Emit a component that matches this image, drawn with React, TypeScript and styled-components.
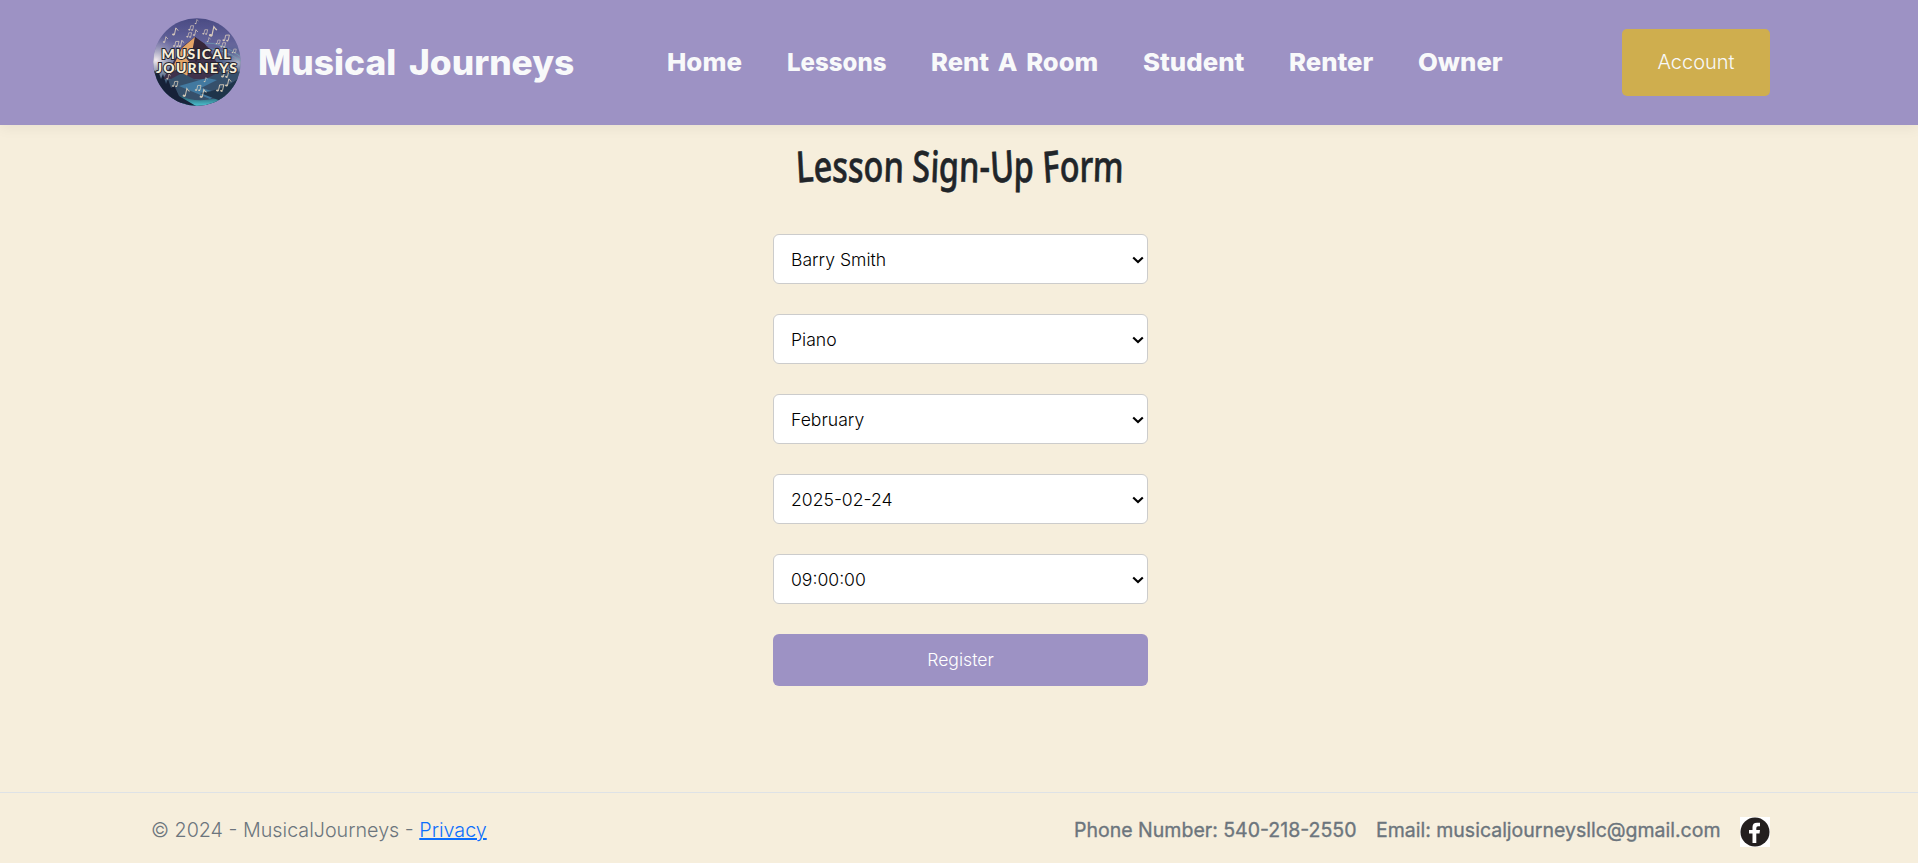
import React, { useLayoutEffect, useRef, useState } from 'react';
import styled, { createGlobalStyle } from 'styled-components';

const GlobalStyle = createGlobalStyle`
  *, *::before, *::after { box-sizing: border-box; }
  html, body { margin: 0; background: #f6eedc; }
  body { font-family: Inter, "Liberation Sans", sans-serif; font-weight: 300; font-size: 20px; color: #212529; overflow: hidden; }
`;

const Page = styled.div`
  display: flex;
  flex-direction: column;
  height: 863px;
`;

const Header = styled.header`
  flex: 0 0 125px;
  display: flex;
  align-items: center;
  padding: 0 148px 0 153px;
  background: #9d92c4;
  box-shadow: 0 4px 12px rgba(0, 0, 0, 0.05);
`;

const Brand = styled.a`
  display: flex;
  align-items: center;
  gap: 17px;
  width: 514px;
  padding-bottom: 2px;
  color: #f8f9fa;
  font-size: 35px;
  font-weight: 800;
  word-spacing: 5px;
`;

const Logo = styled.svg`
  width: 88px;
  height: 88px;
  flex: none;
`;

const Nav = styled.nav`
  flex: 1;
  display: flex;
  gap: 45px;
  padding-bottom: 2px;
`;

const NavLink = styled.a`
  color: #f8f9fa;
  font-size: 24.5px;
  font-weight: 800;
  line-height: 36px;
  word-spacing: 3px;
`;

const AccountButton = styled.button`
  width: 148px;
  height: 67px;
  padding: 0 0 2px;
  border: 0;
  border-radius: 5px;
  background: #cfae4e;
  color: #f8f9fa;
  font: 300 20px Inter, sans-serif;
`;

const Main = styled.main`
  flex: 1;
  display: flex;
  flex-direction: column;
  align-items: center;
`;

const Title = styled.h1`
  margin: 11px 0 38px 2px;
  height: 60px;
  font: 500 43px/60px "Noto Sans", "Open Sans", sans-serif;
  -webkit-text-stroke: 0.6px #212529;
`;

const Letter = styled.span<{ $tilt: number }>`
  display: inline-block;
  white-space: pre;
  transform: rotate(${(p) => p.$tilt}deg);
`;

const Form = styled.form`
  display: flex;
  flex-direction: column;
  gap: 30px;
  width: 375px;
  margin-left: 3px;
`;

const Field = styled.label`
  display: grid;
  grid-template-columns: 1fr 12px 4px;
  align-items: center;
  height: 50px;
`;

const Select = styled.select`
  grid-area: 1 / 1 / 2 / 4;
  appearance: none;
  height: 50px;
  padding: 0 0 0 17px;
  border: 1px solid #ccc;
  border-radius: 6px;
  background: #fff;
  color: #000;
  font: 300 17.6px Inter, sans-serif;
`;

const Chevron = styled.svg`
  grid-area: 1 / 2;
  width: 12px;
  height: 8px;
  margin-top: 1px;
  pointer-events: none;
  z-index: 1;
`;

const Submit = styled.button`
  height: 52px;
  padding: 0 0 2px;
  border: 0;
  border-radius: 6px;
  background: #9d92c4;
  color: #fff;
  font: 300 17.6px Inter, sans-serif;
`;

const Footer = styled.footer`
  flex: 0 0 71px;
  display: flex;
  align-items: center;
  padding: 8px 148px 0 151px;
  border-top: 1px solid #dee2e6;
  color: #6c757d;
`;

const Copyright = styled.div`
  margin: -4px auto 0 0;
`;

const Privacy = styled.a`
  color: #0d6efd;
  text-decoration: underline;
`;

const Contact = styled.span`
  margin: -4px 19px 0 0;
  font-weight: 400;
  -webkit-text-stroke: 0.35px #6c757d;
`;

const Facebook = styled.svg`
  width: 30px;
  height: 30px;
`;

const FitBox = styled.span`
  display: inline-block;
  white-space: nowrap;
`;

const FitText = styled.span`
  display: inline-block;
  transform-origin: 0 50%;
`;

/* Squeezes or widens a line of text to a fixed width. */
function Fit({ width, children }: { width: number; children: React.ReactNode }) {
  const ref = useRef<HTMLSpanElement>(null);
  const [scale, setScale] = useState(1);
  useLayoutEffect(() => {
    if (ref.current) setScale(width / ref.current.offsetWidth);
  }, [width]);
  return (
    <FitBox style={{ width }}>
      <FitText ref={ref} style={{ transform: `scaleX(${scale})` }}>{children}</FitText>
    </FitBox>
  );
}

const notes: [number, number, number][] = [
  [23, 14, 1], [38, 10, 0.7], [43, 15, 0.8], [52, 14, 0.7], [61, 14, 1.3], [73, 20, 0.9],
  [13, 22, 0.8], [23, 26, 0.8], [29, 26, 0.9], [36, 17, 0.7], [56, 22, 0.6], [70, 27, 0.7],
  [44, 4, 0.6], [81, 33, 0.6], [16, 59, 0.7], [22, 66, 0.8], [34, 75, 1.1], [45, 70, 0.8],
  [51, 76, 1.1], [67, 70, 1], [76, 65, 1], [72, 56, 1], [53, 62, 0.6], [65, 24, 0.6],
];

function LogoArt() {
  return (
    <Logo viewBox="0 0 88 88">
      <defs>
        <clipPath id="disc"><circle cx="44" cy="44" r="43.8" /></clipPath>
        <linearGradient id="sky" x1="0" y1="0" x2="0" y2="1">
          <stop offset="0" stopColor="#4a4b84" />
          <stop offset="0.3" stopColor="#65659c" />
          <stop offset="0.6" stopColor="#4b6685" />
          <stop offset="1" stopColor="#193047" />
        </linearGradient>
        <radialGradient id="glow">
          <stop offset="0" stopColor="#f5edf0" />
          <stop offset="1" stopColor="#aaa5c3" stopOpacity="0" />
        </radialGradient>
        <linearGradient id="lake" x1="0" y1="0" x2="0" y2="1">
          <stop offset="0" stopColor="#254457" />
          <stop offset="1" stopColor="#4bc5d3" />
        </linearGradient>
      </defs>
      <g clipPath="url(#disc)">
        <rect width="88" height="88" fill="url(#sky)" />
        <ellipse cx="3" cy="42" rx="27" ry="24" fill="url(#glow)" />
        <ellipse cx="84" cy="45" rx="15" ry="12" fill="url(#glow)" opacity="0.6" />
        <path d="M52 25Q68 24 88 39M48 31Q69 29 88 43" stroke="#6fa3b3" fill="none" opacity="0.7" />
        <path d="M10 61 29 29 42 19 55 29 73 61Z" fill="#40334d" />
        <path d="M42 19 29 30 16 57 24 51 33 61 38 46 33 40 41 31Z" fill="#e4a567" />
        <path d="M42 19 52 26 58 38 48 33 43 45 39 34Z" fill="#38283b" />
        <path d="M9 66 29 55 47 64 72 51 88 54V88H8Z" fill="#37516c" />
        <path d="M26 68 54 60 64 62 48 70 66 75 57 81Z" fill="#427aa0" />
        <path d="M26 77Q46 88 77 76L70 88H30Z" fill="url(#lake)" />
        <path d="M0 50 3 56 5 52 8 61 10 56 13 66 15 61 18 70 21 67 26 78 43 88H0Z" fill="#182239" />
        <path d="M88 59Q69 73 47 75L68 83 88 76Z" fill="#20354a" />
        <g fill="#eddcc3" stroke="#eddcc3" opacity="0.85">
          {notes.map(([x, y, s], i) => (
            <g key={i} transform={`translate(${x} ${y}) scale(${s}) rotate(12)`}>
              <ellipse cx="-2" cy="3" rx="1.4" ry="1" stroke="none" />
              <path d={i % 2 ? 'M-1 3V-3L3-4V2' : 'M-1 3V-4Q1-2 2-2'} fill="none" strokeWidth="0.9" />
              {i % 2 === 1 && <ellipse cx="2" cy="2.5" rx="1.3" ry="1" stroke="none" />}
            </g>
          ))}
        </g>
        <g fill="#f7efda" stroke="#24232e" strokeWidth="2" paintOrder="stroke" fontFamily="Lato, sans-serif" fontWeight="900" fontSize="14">
          <text x="8.5" y="40.5" textLength="69" lengthAdjust="spacing">MUSICAL</text>
          <text x="3" y="54.5" textLength="81" lengthAdjust="spacing">JOURNEYS</text>
        </g>
      </g>
    </Logo>
  );
}

const links: [string, number][] = [
  ['Home', 75], ['Lessons', 99], ['Rent A Room', 167], ['Student', 101], ['Renter', 84], ['Owner', 85],
];

const fields = ['Barry Smith', 'Piano', 'February', '2025-02-24', '09:00:00'];

const title = 'Lesson Sign-Up Form';
const tilts = [-4, -5, 3, 3, 0, 2, 0, 3, 3, 2, 2, 0, -4, 1, 0, -5, 0, 0, 2];

export default function App() {
  return (
    <>
      <GlobalStyle />
      <Page>
        <Header>
          <Brand>
            <LogoArt />
            <Fit width={316}>Musical Journeys</Fit>
          </Brand>
          <Nav>
            {links.map(([label, width]) => (
              <NavLink key={label}><Fit width={width}>{label}</Fit></NavLink>
            ))}
          </Nav>
          <AccountButton>Account</AccountButton>
        </Header>
        <Main>
          <Title>
            <Fit width={328}>
              {[...title].map((c, i) => <Letter key={i} $tilt={tilts[i]}>{c}</Letter>)}
            </Fit>
          </Title>
          <Form>
            {fields.map((f) => (
              <Field key={f}>
                <Select><option>{f}</option></Select>
                <Chevron viewBox="0 0 12 8">
                  <path d="M1.2 1.4 6 6.1 10.8 1.4" fill="none" stroke="#000" strokeWidth="2.1" />
                </Chevron>
              </Field>
            ))}
            <Submit type="button">Register</Submit>
          </Form>
        </Main>
        <Footer>
          <Copyright>
            <Fit width={336}>© 2024 - MusicalJourneys - <Privacy>Privacy</Privacy></Fit>
          </Copyright>
          <Contact><Fit width={283}>Phone Number: 540-218-2550</Fit></Contact>
          <Contact><Fit width={345}>Email: musicaljourneysllc@gmail.com</Fit></Contact>
          <Facebook viewBox="0 0 30 30">
            <rect width="30" height="30" fill="#fff" />
            <circle cx="15" cy="15" r="14.5" fill="#231f20" />
            <path d="M12.5 26V16.5H9V13H12.5V10Q12.5 5.7 17 5.7H20V9.3H18Q16.3 9.3 16.3 11V13H20L19.5 16.5H16.3V26Z" fill="#fff" />
          </Facebook>
        </Footer>
      </Page>
    </>
  );
}
